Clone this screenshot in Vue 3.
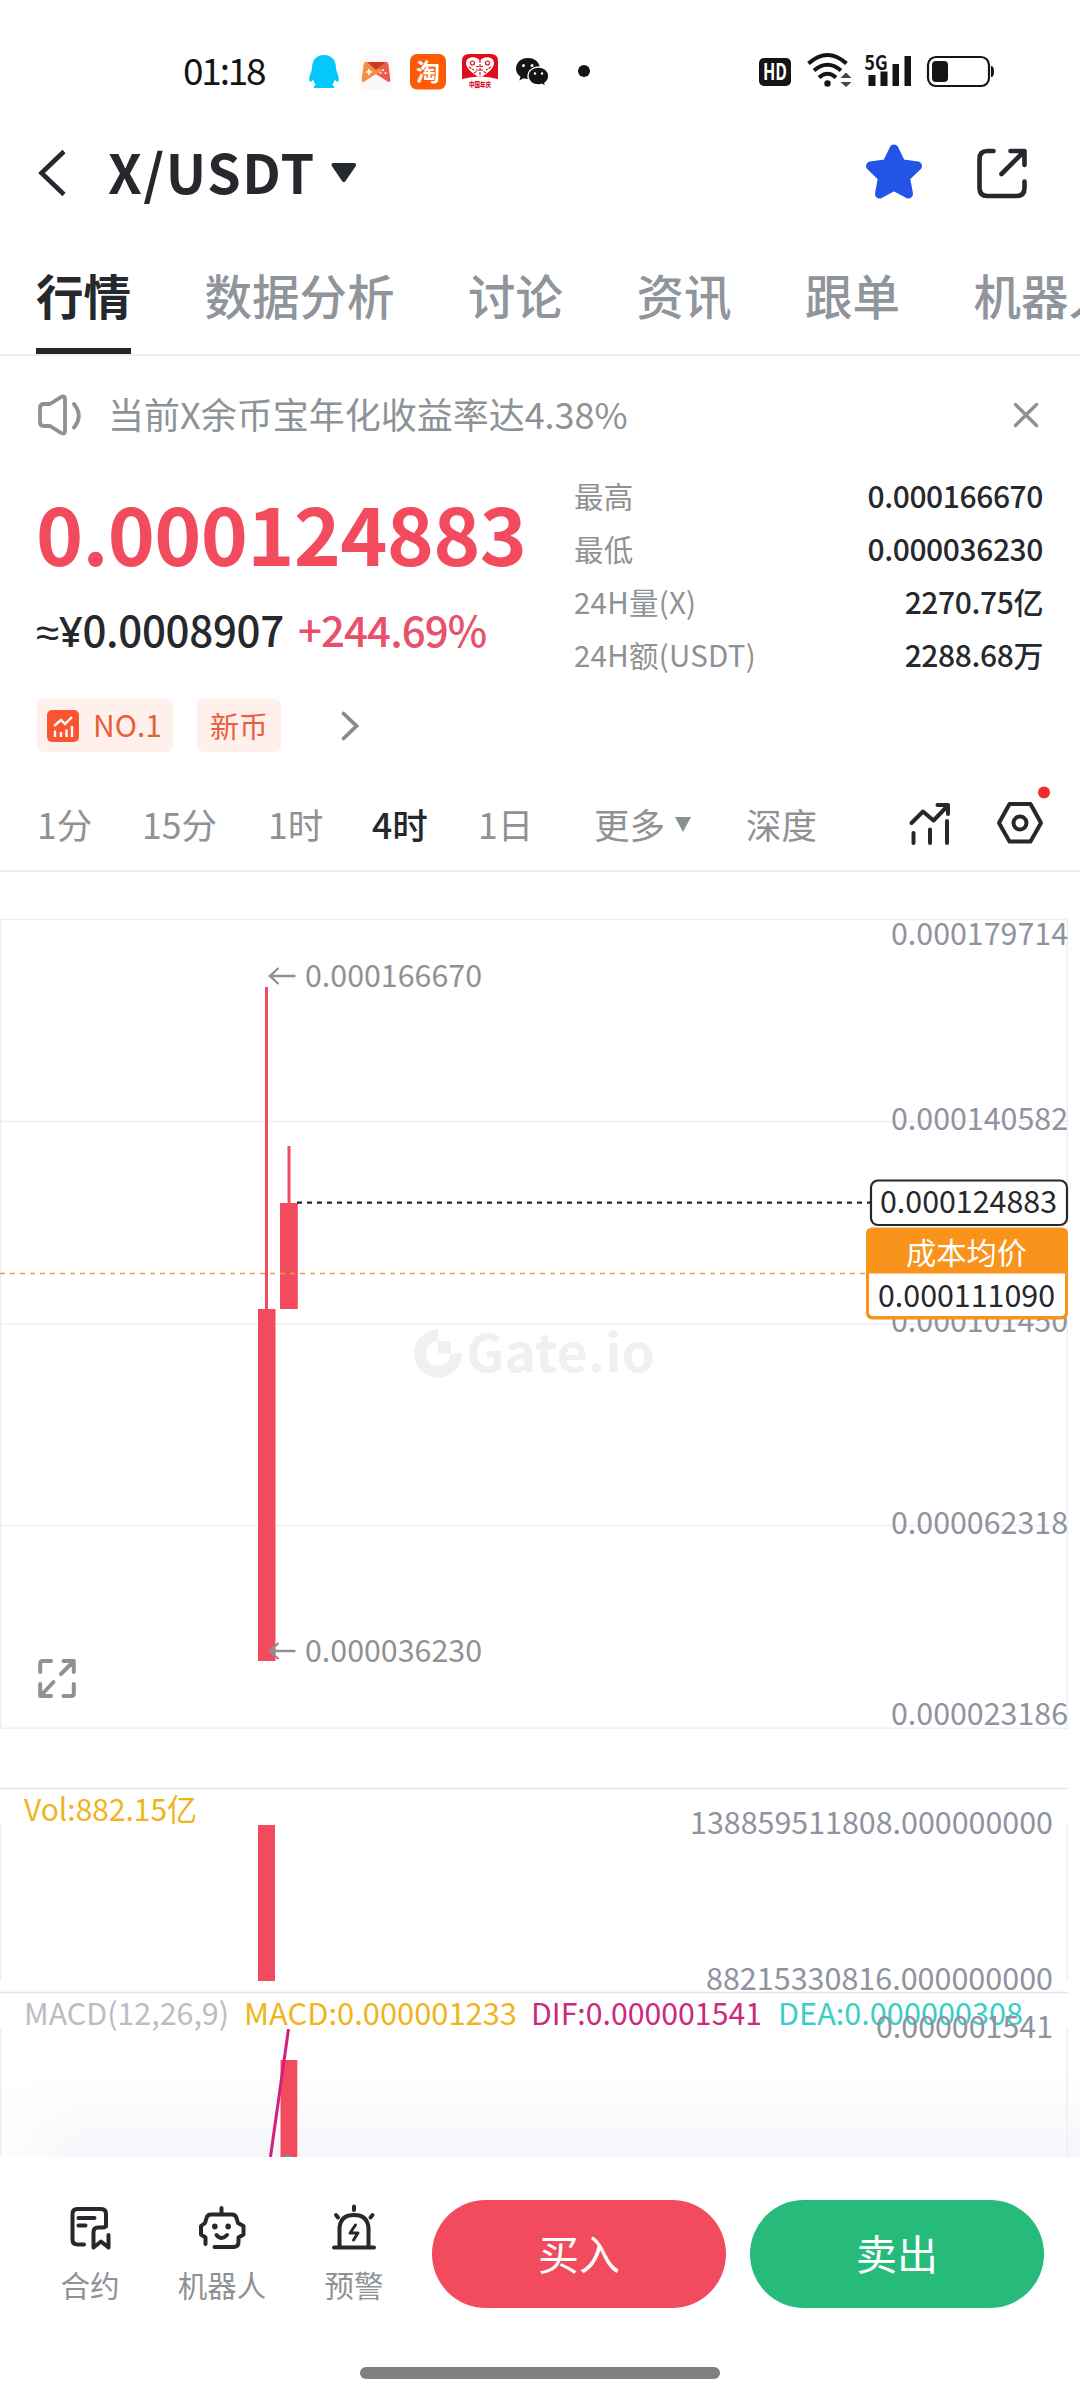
<script setup>
const tabs = ['行情', '数据分析', '讨论', '资讯', '跟单', '机器人']
const stats = [
  ['最高', '0.000166670'],
  ['最低', '0.000036230'],
  ['24H量(X)', '2270.75亿'],
  ['24H额(USDT)', '2288.68万'],
]
const priceTicks = [
  { v: '0.000179714', y: 945 },
  { v: '0.000140582', y: 1130 },
  { v: '0.000101450', y: 1332 },
  { v: '0.000062318', y: 1534 },
  { v: '0.000023186', y: 1725 },
]
</script>

<template>
  <div class="screen">
    <div class="status">
      <span class="time">01:18</span>
      <svg class="apps" width="290" height="60" viewBox="304 41 290 60">
        <path d="M324 55c-8 0-12 5.500-12 13 0 3-2.800 7-2.800 11 0 2 .8 3 1.600 2.800.9-.2 1.600-1.300 2.200-2.300.6 2 1.500 3.800 2.800 5.200-1.400.8-2 1.700-2 3.300h20.400c0-1.600-.6-2.500-2-3.300 1.300-1.400 2.200-3.200 2.800-5.200.6 1 1.300 2.100 2.200 2.300.8.2 1.600-.8 1.600-2.800 0-4-2.800-8-2.800-11 0-7.500-4-13-12-13z" fill="#04c8fb" />
        <rect x="359" y="56" width="34" height="34" rx="7" fill="#faf8f8" />
        <path d="M366 62h20q2 0 2.400 2l1.900 16q.2 3-2.300 1.700L376 74z" fill="#ee5a4c" />
        <path d="M366 62h4l13 9-7 3-12 7.700q-2.500 1.300-2.200-1.700l1.800-16q.4-2 2.400-2z" fill="#f49045" />
        <path d="M367 62h18l-9 8z" fill="#c9391f" />
        <path d="M366 72h6M369 69v6" stroke="#fff" stroke-width="1.500" />
        <g fill="#fff"><circle cx="383" cy="70" r="1" /><circle cx="380.500" cy="73" r="1" /><circle cx="385.500" cy="73" r="1" /></g>
        <rect x="410" y="54" width="36" height="35.500" rx="7" fill="#ff5b05" />
        <text x="428" y="80.500" text-anchor="middle" font-size="24" font-weight="700" fill="#fff">淘</text>
        <path d="M469 54h22q7 0 7 7v18q-18-5-36 0V61q0-7 7-7z" fill="#de0c1d" />
        <path d="M480 78c-8-5-14-9.500-14-15 0-6.500 10-8 14-2.500 4-5.500 14-4 14 2.500C494 68.500 488 73 480 78z" fill="#fff" />
        <g fill="none" stroke="#de0c1d" stroke-width="1.100">
          <path d="M480 60v17M476 66.500h8M476 70h8M469 67l5 3M491 67l-5 3M474 73l3-2M486 73l-3-2" stroke-dasharray="3 1" />
          <circle cx="472.500" cy="63" r="2" /><circle cx="487.500" cy="63" r="2" />
        </g>
        <text x="469" y="87" font-size="7" font-weight="900" fill="#d8101d" textLength="22" lengthAdjust="spacingAndGlyphs">中国年庆</text>
        <path d="M528 58c-7 0-12 4.700-12 10.500 0 3.400 1.700 6.300 4.500 8.200l-1.200 3.800 4.300-2.200c1.400.4 2.800.6 4.400.6 6.600 0 12-4.600 12-10.400S534.700 58 528 58z" fill="#151515" />
        <path d="M538.500 67c-6 0-10.500 4-10.500 9s4.500 9 10.500 9c1.300 0 2.500-.2 3.600-.5l3.700 2-1-3.300c2.300-1.700 3.900-4.200 3.900-7.200 0-5-4.600-9-10.200-9z" fill="#151515" stroke="#fff" stroke-width="1.300" />
        <g fill="#fff"><circle cx="523.500" cy="65.500" r="1.500" /><circle cx="532" cy="65.500" r="1.500" /><circle cx="535" cy="73.500" r="1.200" /><circle cx="542" cy="73.500" r="1.200" /></g>
        <circle cx="584" cy="71" r="6" fill="#141414" />
      </svg>
      <svg class="sys" width="240" height="60" viewBox="757 41 240 60">
        <rect x="759" y="58" width="32" height="28" rx="5" fill="#151515" />
        <text x="763" y="80" font-size="22" font-weight="700" fill="#fff" textLength="24" lengthAdjust="spacingAndGlyphs">HD</text>
        <g fill="none" stroke="#151515" stroke-width="4">
          <path d="M808.500 63.500Q827.500 46.500 846.500 63.500" />
          <path d="M814 70.500Q827.500 59 841 70.500" />
          <path d="M819 77.500Q827.500 70 836 77.500" />
        </g>
        <circle cx="827.500" cy="83.500" r="3.200" fill="#151515" />
        <path d="M840.500 78l5.500-5.500 5.500 5.500zM840.500 82l5.500 5 5.500-5z" fill="#444" />
        <path d="M868.500 75h7v11h-7zM880.500 71.500h7V86h-7zM892.500 64h6.500v22h-6.500zM904.500 56h6.500v30h-6.500z" fill="#151515" />
        <text x="864.500" y="69.500" font-size="20" font-weight="700" fill="#151515" textLength="23" lengthAdjust="spacingAndGlyphs">5G</text>
        <rect x="928" y="57" width="61" height="29" rx="8" fill="none" stroke="#151515" stroke-width="2.200" />
        <rect x="932" y="61" width="16" height="21" rx="4" fill="#151515" />
        <path d="M991 66q3 0 3 5.500t-3 5.500z" fill="#151515" />
      </svg>
    </div>

    <header class="head">
      <svg width="30" height="50" viewBox="38 148 30 50"><path d="M64 151.500L41.500 173 64 194.500" fill="none" stroke="#25282f" stroke-width="4.600" /></svg>
      <h1>X/USDT</h1>
      <svg class="caret" width="28" height="24" viewBox="331 162 28 24"><path d="M334.500 166h20.500L344.700 181z" fill="#25282f" stroke="#25282f" stroke-width="4" stroke-linejoin="round" /></svg>
      <svg class="star" width="60" height="60" viewBox="864 143 60 60"><path d="M894 149l7.200 14.800 16.300 2.200-12 11.500 3 16.500-14.500-7.800-14.500 7.800 3-16.500-12-11.500 16.300-2.200z" fill="#2354e6" stroke="#2354e6" stroke-width="9" stroke-linejoin="round" /></svg>
      <svg width="56" height="56" viewBox="974 144 56 56"><g fill="none" stroke="#25282f" stroke-width="4.600" stroke-linecap="round" stroke-linejoin="round"><path d="M993.500 150h-6q-8 0-8 8v29q0 8 8 8h29q8 0 8-8v-6.500M1010.500 150h14v14M1024 150.500l-22.500 22.500" /></g></svg>
    </header>

    <nav class="tabs">
      <span v-for="(t, i) in tabs" :key="t" :class="{ on: i === 0 }">{{ t }}</span>
    </nav>

    <div class="notice">
      <svg width="48" height="44" viewBox="35 392 48 44"><g fill="none" stroke="#8d9296" stroke-width="3.800" stroke-linejoin="round" stroke-linecap="round"><path d="M50 403L60.500 396.300q4.500-2.500 4.500 2v31.400q0 4.500-4.500 2L50 425H44q-4 0-4-4v-14q0-4 4-4z" /><path d="M74 403q9.500 12 0 23.500" /></g></svg>
      <p>当前X余币宝年化收益率达4.38%</p>
      <svg class="close" width="26" height="26" viewBox="1013 402 26 26"><path d="M1015.500 404.500l21 21M1036.500 404.500l-21 21" stroke="#8d9296" stroke-width="3.400" stroke-linecap="round" /></svg>
    </div>

    <section class="quote">
      <div class="left">
        <div class="price">0.000124883</div>
        <div class="sub"><span class="cny"><span class="sym">≈¥</span>0.0008907</span><span class="pct">+244.69%</span></div>
        <div class="tags">
          <span class="tag">
            <svg width="32" height="32" viewBox="0 0 32 32"><rect width="32" height="32" rx="5" fill="#fa5430" /><path d="M7 16l7-6 4 4 7-7M8 20.500V27M14 22v5M19.500 19.500V27M25 16v11" fill="none" stroke="#fff" stroke-width="2.400" /></svg>
            <b>NO.1</b>
          </span>
          <span class="tag new">新币</span>
          <svg class="more" width="20" height="32" viewBox="340 709 20 32"><path d="M343.500 712.500L356.500 725l-13 12.500" fill="none" stroke="#858b8e" stroke-width="3.800" stroke-linecap="round" /></svg>
        </div>
      </div>
      <div class="stats">
        <div v-for="s in stats" :key="s[0]" class="row"><span>{{ s[0] }}</span><b>{{ s[1] }}</b></div>
      </div>
    </section>

    <div class="periods">
      <span class="p1">1分</span><span class="p2">15分</span><span class="p3">1时</span><span class="p4 on">4时</span><span class="p5">1日</span>
      <span class="p6">更多<i></i></span><span class="p7">深度</span>
      <svg width="150" height="66" viewBox="900 786 150 66">
        <g fill="none" stroke="#25282c" stroke-width="4" stroke-linecap="round" stroke-linejoin="round">
          <path d="M911.500 824L923 812.500l10.500 9L947.500 807M937.500 806H948V815" />
          <path d="M913.500 834V844M930 830.500V844M947 822V844" />
          <path d="M1009.500 805h21L1041 824l-10.500 18.500h-21L999 824z" /><circle cx="1020" cy="824" r="6.500" />
        </g>
        <circle cx="1044" cy="793.500" r="6" fill="#f02c2c" />
      </svg>
    </div>

    <svg class="chart" width="1080" height="1285" viewBox="0 872 1080 1285">
      <defs>
        <linearGradient id="fade" x1="0" y1="0" x2="0" y2="1"><stop offset="0" stop-color="#f5f6fa" stop-opacity="0" /><stop offset="1" stop-color="#f5f6fa" /></linearGradient>
        <linearGradient id="side"><stop offset="0" stop-color="#fff" stop-opacity=".8" /><stop offset="1" stop-color="#fff" stop-opacity="0" /></linearGradient>
      </defs>
      <rect x="0" y="2070" width="1080" height="87" fill="url(#fade)" />
      <rect x="0" y="2070" width="90" height="87" fill="url(#side)" />
      <g fill="none" stroke="#efeff2" stroke-width="1.500">
        <path d="M.7 919.500H1067.300V1728.300H.7z" />
        <path d="M0 1121.500H1067M0 1324H1067M0 1525.500H1067" />
        <path d="M.7 1824V1981M1067.300 1824V1981M.7 2028V2157M1067.300 2028V2157" />
      </g>
      <path d="M0 1788.500H1068M0 1992.500H1068" stroke="#e4e4e6" stroke-width="1.300" />

      <g fill="#f0f0f0">
        <path d="M438 1329.500v11.500a12.500 12.500 0 1 0 12.500 12.500H462a24 24 0 1 1-24-24z" />
        <rect x="438" y="1341" width="13" height="12.500" />
        <text x="466" y="1372" font-size="51" font-weight="700" textLength="189" lengthAdjust="spacingAndGlyphs">Gate.io</text>
      </g>

      <g fill="#8f93a0" font-size="30.500">
        <text v-for="t in priceTicks" :key="t.v" x="891" :y="t.y" textLength="177" lengthAdjust="spacingAndGlyphs">{{ t.v }}</text>
      </g>

      <g fill="#f34b5e">
        <rect x="265" y="987" width="3" height="323" /><rect x="258" y="1309" width="17.500" height="352" />
        <rect x="287.500" y="1146" width="3" height="60" /><rect x="280" y="1203" width="17.800" height="106" />
        <rect x="258" y="1825" width="17" height="156" /><rect x="280.500" y="2060" width="16.800" height="97" />
      </g>
      <path d="M297 1202.700H870" stroke="#25282c" stroke-width="2.200" stroke-dasharray="5 5" />
      <path d="M0 1273.500H866" stroke="#e9a048" stroke-width="1.600" stroke-dasharray="5 5" />

      <g fill="none" stroke="#8f9294" stroke-width="2.400"><path d="M295.500 976H270M278.500 968l-8.500 8 8.500 8" /><path d="M295.500 1651H270M278.500 1643l-8.500 8 8.500 8" /></g>
      <g fill="#8f9294" font-size="30.500">
        <text x="305" y="987" textLength="177" lengthAdjust="spacingAndGlyphs">0.000166670</text>
        <text x="305" y="1662" textLength="177" lengthAdjust="spacingAndGlyphs">0.000036230</text>
      </g>

      <rect x="871" y="1180.500" width="196" height="44.500" rx="7" fill="#fff" stroke="#25282c" stroke-width="2.200" />
      <text x="880" y="1213" font-size="30.500" fill="#25282c" textLength="177" lengthAdjust="spacingAndGlyphs">0.000124883</text>
      <rect x="866" y="1227.500" width="202" height="92" rx="6" fill="#f8931c" />
      <path d="M869 1273.500h196v38.500q0 4-4 4H873q-4 0-4-4z" fill="#fff" />
      <text x="906" y="1264" font-size="30" fill="#fff" textLength="121" lengthAdjust="spacingAndGlyphs">成本均价</text>
      <text x="878" y="1307" font-size="30.500" fill="#25282c" textLength="177" lengthAdjust="spacingAndGlyphs">0.000111090</text>

      <g fill="none" stroke="#8f9294" stroke-width="4" stroke-linecap="round" stroke-linejoin="round">
        <path d="M40.200 1672V1663.500q0-2.500 2.500-2.500H51M63.500 1661h10.300v11M73 1662L61 1674M40.200 1684v12H51M41 1695.500L53.500 1682M73.800 1684v9.500q0 2.500-2.500 2.500H63.500" />
      </g>

      <g font-size="30.500">
        <text x="24" y="1821" fill="#efb41e" textLength="173" lengthAdjust="spacingAndGlyphs">Vol:882.15亿</text>
        <text x="690" y="1834" fill="#8f93a0" textLength="363" lengthAdjust="spacingAndGlyphs">138859511808.000000000</text>
        <text x="706" y="1990" fill="#8f93a0" textLength="347" lengthAdjust="spacingAndGlyphs">88215330816.000000000</text>
        <text x="24" y="2025" fill="#babdc4" textLength="205" lengthAdjust="spacingAndGlyphs">MACD(12,26,9)</text>
        <text x="244" y="2025" fill="#efb41e" textLength="273" lengthAdjust="spacingAndGlyphs">MACD:0.000001233</text>
        <text x="531" y="2025" fill="#cc2a7d" textLength="231" lengthAdjust="spacingAndGlyphs">DIF:0.000001541</text>
        <text x="778" y="2025" fill="#3bcdc6" textLength="245" lengthAdjust="spacingAndGlyphs">DEA:0.000000308</text>
        <text x="876" y="2038" fill="#8f93a0" textLength="177" lengthAdjust="spacingAndGlyphs">0.000001541</text>
      </g>
      <path d="M288.500 2029L270.500 2157" stroke="#d3207e" stroke-width="3" />
      <path d="M284.500 2157q3-5 6 0z" fill="#33b5a8" />
    </svg>

    <footer class="bottom">
      <div class="actions">
        <div class="act a1">
          <svg width="50" height="50" viewBox="65 2203 50 50"><g fill="none" stroke="#25282c" stroke-width="4" stroke-linecap="round" stroke-linejoin="round"><path d="M84 2244.500h-6.500q-5 0-5-5V2214q0-5 5-5H101q5 0 5 5v12.500M78.500 2218h16M78.500 2225.500h7M93.500 2247.500V2232q0-4.500 4.500-4.500h5q2.500 0 2.500-2M93.500 2247.500l7.500-6 7.500 6V2235" /></g></svg>
          <span>合约</span>
        </div>
        <div class="act a2">
          <svg width="54" height="50" viewBox="195 2203 54 50"><g fill="none" stroke="#25282c" stroke-width="4" stroke-linecap="round" stroke-linejoin="round"><path d="M221.500 2208v6M205.500 2244V2237.500L201 2234.500V2226L205 2223L206.500 2218Q207.500 2214.500 211 2214.500H232Q235.500 2214.500 236.500 2218L238 2223L243.500 2226V2234.500L238.500 2237.500V2242Q238.500 2247 233.500 2247H214.500" /><path d="M216.500 2235q5 6 10.500 0" /></g><ellipse cx="214.800" cy="2226.500" rx="2.800" ry="3" fill="#25282c" /><ellipse cx="228.200" cy="2226.500" rx="2.800" ry="3" fill="#25282c" /></svg>
          <span>机器人</span>
        </div>
        <div class="act a3">
          <svg width="50" height="50" viewBox="329 2203 50 50"><g fill="none" stroke="#25282c" stroke-width="4" stroke-linecap="round" stroke-linejoin="round"><path d="M334 2247.500h40M339.500 2247v-17.500q0-14.500 14.500-14.500t14.500 14.500V2247M354 2206.500v3.500M336 2215l2 2.500M372.500 2215l-2 2.500" /><path d="M355.500 2225l-5.500 8h8l-4.500 7" stroke-width="3" /></g></svg>
          <span>预警</span>
        </div>
      </div>
      <button class="buy">买入</button>
      <button class="sell">卖出</button>
    </footer>
    <div class="home"></div>
  </div>
</template>

<style>
body { background: #fff; }
</style>

<style scoped>
.screen { width: 1080px; height: 2400px; overflow: hidden; background: #fff; color: #25282c; font-family: "Noto Sans CJK SC", sans-serif; display: flex; flex-direction: column; }
.screen > * { flex-shrink: 0; }
svg { display: block; flex-shrink: 0; }
.status { height: 142px; display: flex; align-items: center; padding-left: 183px; }
.time { width: 121px; font-size: 37px; line-height: 40px; padding-bottom: 5px; color: #141414; letter-spacing: -2.2px; }
.sys { margin-left: 163px; }
.head { height: 62px; display: flex; align-items: center; padding: 0 50px 0 38px; }
.head h1 { margin: 0; width: 222px; padding: 0 0 4px 40px; font-size: 54px; line-height: 60px; font-weight: 700; white-space: nowrap; letter-spacing: 1.500px; }
.star { margin-left: auto; margin-right: 50px; }
.tabs { height: 150px; border-bottom: 2px solid #eee; display: flex; gap: 73.500px; padding-left: 36px; white-space: nowrap; overflow: hidden; font-size: 47.500px; color: #8f959a; font-weight: 500; align-items: flex-end; }
.tabs span { flex-shrink: 0; height: 101px; box-sizing: border-box; line-height: 84px; }
.tabs .on { color: #25282c; font-weight: 700; border-bottom: 6px solid #24262e; }
.notice { height: 118px; display: flex; align-items: center; padding: 0 41px 0 35px; }
.notice p { margin: 0; padding: 0 0 4px 25px; font-size: 36px; line-height: 44px; color: #8d9296; white-space: nowrap; }
.close { margin-left: auto; }
.quote { height: 281px; display: flex; }
.left { width: 574px; box-sizing: border-box; padding-left: 36px; white-space: nowrap; }
.price { margin-top: 15px; height: 84px; line-height: 84px; font-size: 80px; font-weight: 700; color: #f34b5e; letter-spacing: -.7px; }
.sub { margin-top: 26px; height: 60px; line-height: 60px; font-size: 42px; font-weight: 500; display: flex; }
.cny { width: 262px; letter-spacing: -.3px; }
.sym { font-family: "Noto Sans", sans-serif; }
.pct { color: #e9506a; letter-spacing: -.9px; }
.tags { margin-top: 40px; padding-left: 1px; display: flex; align-items: center; }
.tag { height: 53px; width: 136px; box-sizing: border-box; padding-left: 10px; border-radius: 6px; background: #fff0ec; color: #e85f3c; display: flex; align-items: center; font-size: 30px; line-height: 49px; }
.tag b { font-weight: 400; margin-left: 14px; padding-bottom: 2px; }
.new { margin-left: 24px; width: 84px; padding: 0 0 1px 13px; font-size: 29px; }
.more { margin-left: 59px; }
.stats { width: 469px; margin-top: -5px; }
.row { height: 53px; line-height: 53px; display: flex; justify-content: space-between; font-size: 29.500px; color: #8f9294; letter-spacing: .25px; }
.row b { font-weight: 500; font-size: 30px; color: #25282c; letter-spacing: -.4px; }
.periods { height: 117px; border-bottom: 2px solid #ececec; box-sizing: border-box; display: flex; align-items: center; padding-left: 37px; font-size: 35.500px; line-height: 40px; color: #8f9294; white-space: nowrap; }
.periods span { box-sizing: border-box; flex-shrink: 0; margin-top: 23px; }
.periods svg { margin-top: 10px; }
.periods .on { color: #25282c; font-weight: 500; }
.p1 { width: 105px; } .p2 { width: 126px; } .p3 { width: 104px; } .p4 { width: 106px; } .p5 { width: 116px; } .p6 { width: 152px; } .p7 { width: 154px; }
.p6 { display: flex; align-items: center; }
.p6 i { margin-left: 10px; border: 8.500px solid transparent; border-top: 15px solid #8a8f92; border-bottom: 0; }
.bottom { height: 194px; display: flex; align-items: center; box-sizing: border-box; }
.actions { display: flex; width: 432px; height: 194px; }
.act { display: flex; flex-direction: column; align-items: center; padding-top: 46px; font-size: 29.500px; color: #8f9294; white-space: nowrap; }
.act span { line-height: 40px; margin-top: 11px; }
.a1 { width: 60px; margin-left: 60px; } .a2 { width: 90px; margin-left: 57px; } .a3 { width: 60px; margin-left: 57px; }
button { border: 0; padding: 0 0 4px; width: 294px; height: 108px; border-radius: 54px; color: #fff; font-family: inherit; font-size: 41px; line-height: 60px; }
.buy { background: #f34b5e; }
.sell { background: #26bb7a; margin-left: 24px; }
.home { width: 360px; height: 12px; border-radius: 6px; background: #808080; margin: 16px auto 0; }
</style>
